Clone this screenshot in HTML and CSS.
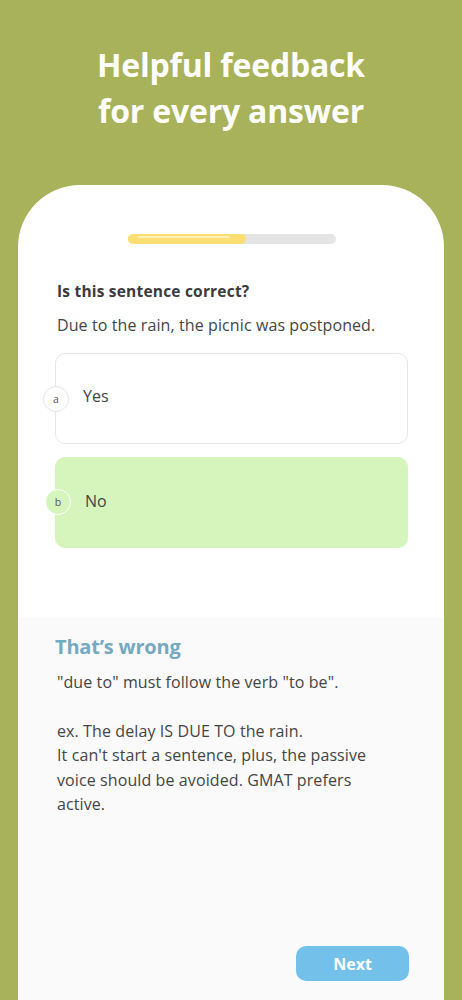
FILE: index.html
```html
<!DOCTYPE html>
<html>
<head>
<meta charset="utf-8">
<link rel="stylesheet" href="styles.css">
</head>
<body>
<div class="page">
  <header class="hero">
    <h1 class="hero-title">Helpful feedback<br>for every answer</h1>
  </header>
  <main class="phone">
    <section class="quiz">
      <div class="progress"><div class="progress-fill"><span class="progress-shine"></span></div></div>
      <h2 class="question">Is this sentence correct?</h2>
      <p class="sentence">Due to the rain, the picnic was postponed.</p>
      <div class="options">
        <div class="option">
          <span class="badge">a</span>
          <span class="option-text">Yes</span>
        </div>
        <div class="option option-selected">
          <span class="badge badge-selected">b</span>
          <span class="option-text">No</span>
        </div>
      </div>
    </section>
    <section class="feedback">
      <h3 class="feedback-title">That’s wrong</h3>
      <p class="feedback-text">"due to" must follow the verb "to be".<br><br>ex. The delay IS DUE TO the rain.<br>It can't start a sentence, plus, the passive voice should be avoided. GMAT prefers active.</p>
      <div class="actions"><button class="next">Next</button></div>
    </section>
  </main>
</div>
</body>
</html>
```

FILE: styles.css
```css
* { box-sizing: border-box; }
html, body { margin: 0; padding: 0; }
body {
  background: #a8b25a;
  font-family: "Open Sans", "DejaVu Sans", sans-serif;
  color: #454545;
}
.page {
  width: 462px;
  height: 1000px;
  display: flex;
  flex-direction: column;
  overflow: hidden;
}
.hero {
  height: 185px;
  display: flex;
  justify-content: center;
  padding-top: 42px;
}
.hero-title {
  margin: 0;
  color: #ffffff;
  font-size: 32px;
  line-height: 46px;
  font-weight: 700;
  text-align: center;
  letter-spacing: -0.2px;
}
.phone {
  flex: 1;
  margin: 0 18px;
  background: #ffffff;
  border-radius: 62px 62px 0 0;
  display: flex;
  flex-direction: column;
  overflow: hidden;
}
.quiz {
  height: 433px;
  padding: 49px 36px 0 37px;
}
.progress {
  width: 208px;
  height: 10px;
  margin: 0 auto;
  background: #e4e4e4;
  border-radius: 5px;
}
.progress-fill {
  width: 118px;
  height: 10px;
  background: #ffdf72;
  border-radius: 5px;
  padding: 2px 16px 0 9px;
}
.progress-shine {
  display: block;
  height: 2px;
  background: #fff1b8;
  border-radius: 1px;
}
.question {
  margin: 36px 0 0 2px;
  font-size: 15.5px;
  line-height: 22px;
  font-weight: 700;
  color: #3b3b3b;
  letter-spacing: 0.2px;
}
.sentence {
  margin: 12px 0 0 2px;
  font-size: 16px;
  line-height: 22px;
  color: #454545;
  letter-spacing: 0.1px;
}
.options {
  margin-top: 17px;
  display: flex;
  flex-direction: column;
  gap: 13px;
}
.option {
  position: relative;
  height: 91px;
  border: 1px solid #e6e6e6;
  border-radius: 10px;
  background: #ffffff;
  display: flex;
  align-items: center;
  padding: 0 0 6px 27px;
}
.option-selected {
  background: #d5f5bd;
  border-color: #d5f5bd;
  padding-left: 29px;
  padding-bottom: 4px;
}
.option-text {
  font-size: 16px;
  color: #444444;
}
.badge {
  position: absolute;
  left: -13px;
  top: 32px;
  width: 26px;
  height: 26px;
  border-radius: 50%;
  border: 1px solid #e6e6e6;
  background: #ffffff;
  font-size: 10.5px;
  color: #555555;
  display: flex;
  align-items: center;
  justify-content: center;
}
.badge-selected {
  left: -11px;
  top: 31px;
  background: #d5f5bd;
  border: 1.5px solid #ffffff;
}
.feedback {
  flex: 1;
  background: #fafafa;
  padding: 15px 35px 19px 37px;
  display: flex;
  flex-direction: column;
}
.feedback-title {
  margin: 0;
  font-size: 20px;
  line-height: 28px;
  font-weight: 700;
  color: #75a9c2;
  letter-spacing: -0.2px;
}
.feedback-text {
  margin: 9px 0 0 2px;
  max-width: 330px;
  font-size: 16px;
  line-height: 24.4px;
  color: #454545;
  letter-spacing: 0.1px;
  flex: 1;
}
.actions {
  display: flex;
  justify-content: flex-end;
}
.next {
  width: 113px;
  height: 35px;
  border: none;
  border-radius: 10px;
  background: #73c1eb;
  color: #ffffff;
  font-family: inherit;
  font-size: 16px;
  font-weight: 700;
}
```
